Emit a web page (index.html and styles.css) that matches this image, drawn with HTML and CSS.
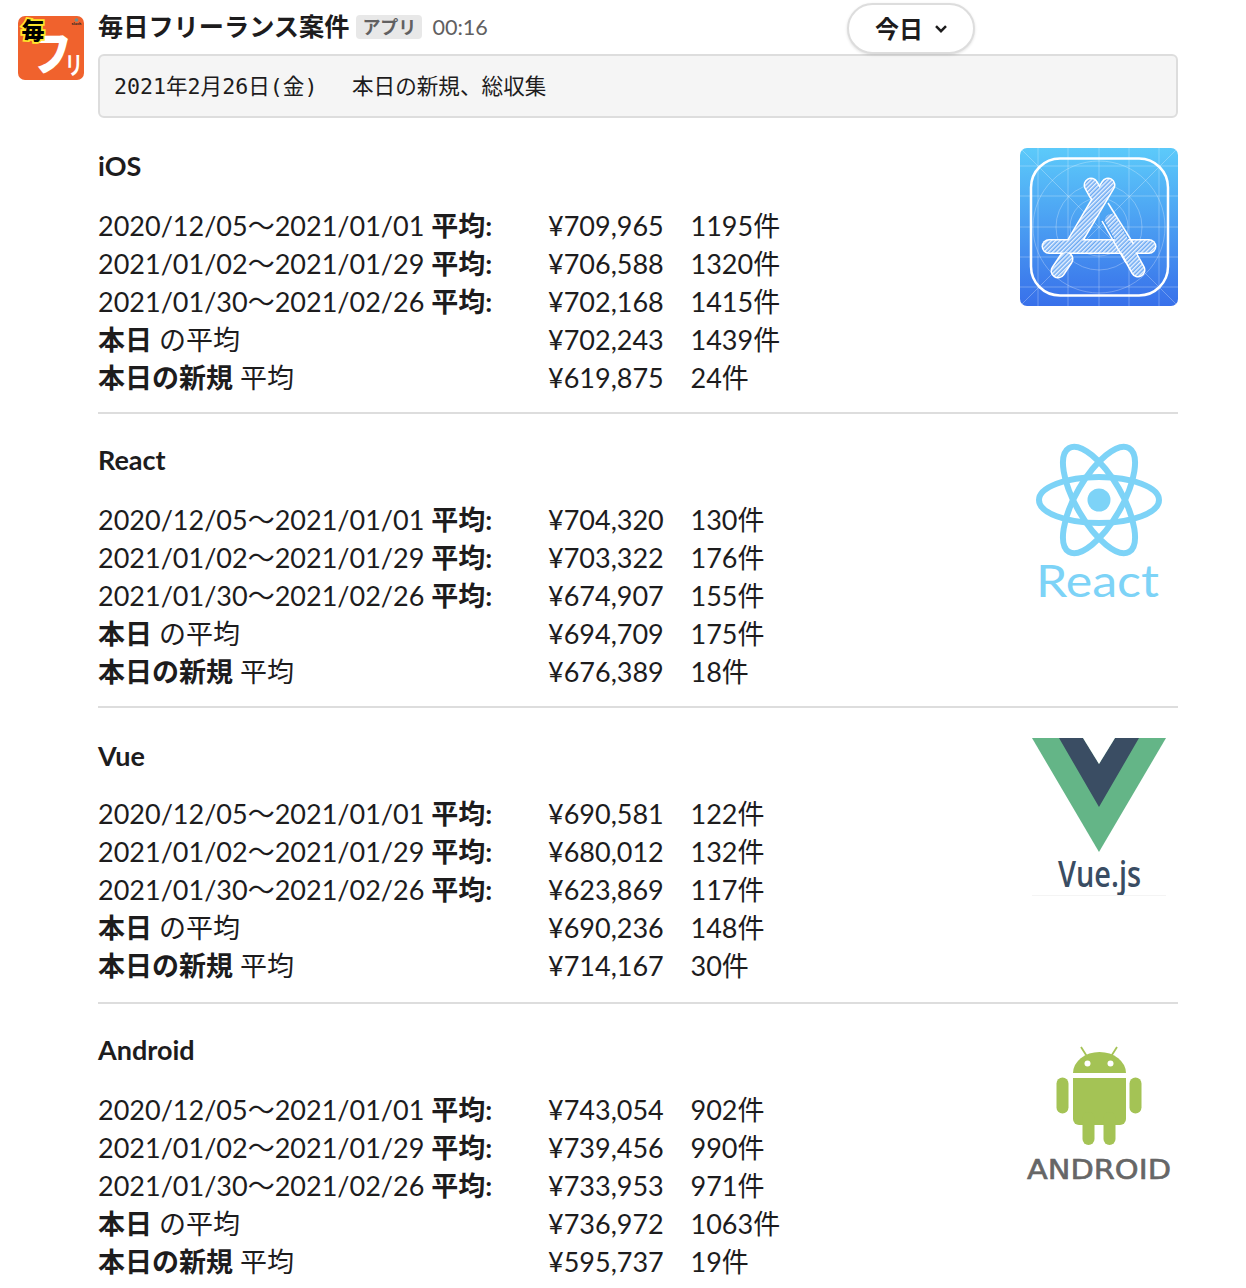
FILE: index.html
```html
<!DOCTYPE html>
<html lang="ja">
<head>
<meta charset="utf-8">
<title>毎日フリーランス案件</title>
<link rel="stylesheet" href="styles.css">
</head>
<body>
<div class="pill"><span>今日</span><svg class="chev" viewBox="0 0 12 8" width="12" height="8"><path d="M1 1.200 6 6.200l5-5" fill="none" stroke="#1d1c1d" stroke-width="2.500"/></svg></div>
<main class="msg">
  <svg class="avatar" viewBox="0 0 66 64" width="66" height="64">
    <rect width="66" height="64" rx="7" fill="#f0622d"/>
    <text class="av-fu" transform="translate(12 54) scale(1 1.100)" x="0" y="0">フ</text>
    <text class="av-ri" transform="translate(47 58) scale(.8 1.150)" x="0" y="0">リ</text>
    <text class="av-mai" x="3.500" y="23">毎</text>
    <circle cx="58.500" cy="4" r="1.800" fill="#6f8f8a"/>
    <text class="av-sl" x="53.500" y="9">slack</text>
  </svg>
  <div class="body">
    <header class="head">
      <strong class="name">毎日フリーランス案件</strong>
      <span class="badge">アプリ</span>
      <span class="time">00:16</span>
    </header>
    <div class="banner">2021年2月26日(金)　 本日の新規、総収集</div>

    <section class="sec sec-first">
      <div class="main">
        <h3 class="title">iOS</h3>
        <div class="row"><span>2020/12/05～2021/01/01 <b>平均:</b></span><span>¥709,965</span><span>1195件</span></div>
        <div class="row"><span>2021/01/02～2021/01/29 <b>平均:</b></span><span>¥706,588</span><span>1320件</span></div>
        <div class="row"><span>2021/01/30～2021/02/26 <b>平均:</b></span><span>¥702,168</span><span>1415件</span></div>
        <div class="row"><span><b>本日</b> の平均</span><span>¥702,243</span><span>1439件</span></div>
        <div class="row"><span><b>本日の新規</b> 平均</span><span>¥619,875</span><span>24件</span></div>
      </div>
      <svg class="logo" viewBox="0 0 158 158" width="158" height="158">
        <defs>
          <linearGradient id="sky" x1="0" y1="0" x2="0" y2="1"><stop offset="0" stop-color="#5ccafa"/><stop offset="1" stop-color="#3870ea"/></linearGradient>
          <pattern id="hatch" width="3" height="3" patternUnits="userSpaceOnUse" patternTransform="rotate(45)"><rect width="3" height="3" fill="#6aa8f2"/><rect width="1.500" height="3" fill="#e6f1ff"/></pattern>
          <clipPath id="tile"><rect width="158" height="158" rx="7"/></clipPath>
        </defs>
        <g clip-path="url(#tile)">
          <rect width="158" height="158" fill="url(#sky)"/>
          <g class="grid">
            <path d="M18 0v158M48 0v158M79 0v158M109 0v158M139 0v158M0 18h158M0 48h158M0 79h158M0 109h158M0 139h158M0 0l158 158M158 0 0 158"/>
            <circle cx="79" cy="79" r="66"/><circle cx="79" cy="79" r="43"/><circle cx="79" cy="79" r="29"/>
          </g>
          <rect class="tile-edge" x="11" y="10.500" width="137" height="137" rx="29"/>
          <g class="stick-w">
            <path d="M71 37 76 46"/>
            <path d="M88 37 52 98"/>
            <path d="M29 98.500H129"/>
            <path d="M46 111 38 123"/>
            <path d="M108 104 118 122"/>
          </g>
          <g class="stick-h">
            <path d="M71 37 76 46"/>
            <path d="M88 37 52 98"/>
            <path d="M29 98.500H129"/>
            <path d="M46 111 38 123"/>
            <path d="M91 72 118 122"/>
          </g>
          <g class="edge">
            <path d="M88 55 113.500 96"/>
            <path d="M82 73 106 115"/>
          </g>
        </g>
      </svg>
    </section>

    <section class="sec">
      <div class="main">
        <h3 class="title">React</h3>
        <div class="row"><span>2020/12/05～2021/01/01 <b>平均:</b></span><span>¥704,320</span><span>130件</span></div>
        <div class="row"><span>2021/01/02～2021/01/29 <b>平均:</b></span><span>¥703,322</span><span>176件</span></div>
        <div class="row"><span>2021/01/30～2021/02/26 <b>平均:</b></span><span>¥674,907</span><span>155件</span></div>
        <div class="row"><span><b>本日</b> の平均</span><span>¥694,709</span><span>175件</span></div>
        <div class="row"><span><b>本日の新規</b> 平均</span><span>¥676,389</span><span>18件</span></div>
      </div>
      <svg class="logo" viewBox="0 0 158 158" width="158" height="158">
        <g class="atom">
          <ellipse cx="79" cy="58" rx="60" ry="23"/>
          <ellipse cx="79" cy="58" rx="60" ry="23" transform="rotate(60 79 58)"/>
          <ellipse cx="79" cy="58" rx="60" ry="23" transform="rotate(120 79 58)"/>
        </g>
        <circle cx="79" cy="58" r="11.500" fill="#7dd3f7"/>
        <text class="react-t" x="16" y="155" textLength="123" lengthAdjust="spacingAndGlyphs">React</text>
      </svg>
    </section>

    <section class="sec sec-vue">
      <div class="main">
        <h3 class="title title-vue">Vue</h3>
        <div class="row"><span>2020/12/05～2021/01/01 <b>平均:</b></span><span>¥690,581</span><span>122件</span></div>
        <div class="row"><span>2021/01/02～2021/01/29 <b>平均:</b></span><span>¥680,012</span><span>132件</span></div>
        <div class="row"><span>2021/01/30～2021/02/26 <b>平均:</b></span><span>¥623,869</span><span>117件</span></div>
        <div class="row"><span><b>本日</b> の平均</span><span>¥690,236</span><span>148件</span></div>
        <div class="row"><span><b>本日の新規</b> 平均</span><span>¥714,167</span><span>30件</span></div>
      </div>
      <svg class="logo" viewBox="0 0 158 158" width="158" height="158">
        <polygon points="12,0 146,0 79,114" fill="#64b587"/>
        <polygon points="39,0 63,0 79,26 95,0 119,0 79,69" fill="#3a4d63"/>
        <polygon points="63,0 95,0 79,26" fill="#fff"/>
        <text class="vue-t" x="38" y="149" textLength="83" lengthAdjust="spacingAndGlyphs">Vue.js</text>
        <path d="M12 157.500h134" stroke="#f4f4f4"/>
      </svg>
    </section>

    <section class="sec sec-last">
      <div class="main">
        <h3 class="title">Android</h3>
        <div class="row"><span>2020/12/05～2021/01/01 <b>平均:</b></span><span>¥743,054</span><span>902件</span></div>
        <div class="row"><span>2021/01/02～2021/01/29 <b>平均:</b></span><span>¥739,456</span><span>990件</span></div>
        <div class="row"><span>2021/01/30～2021/02/26 <b>平均:</b></span><span>¥733,953</span><span>971件</span></div>
        <div class="row"><span><b>本日</b> の平均</span><span>¥736,972</span><span>1063件</span></div>
        <div class="row"><span><b>本日の新規</b> 平均</span><span>¥595,737</span><span>19件</span></div>
      </div>
      <svg class="logo" viewBox="0 0 158 158" width="158" height="158">
        <g fill="#a4c355">
          <path d="M53 41a26.500 21 0 0 1 53 0z"/>
          <path d="M53 46h53v41a6 6 0 0 1-6 6H59a6 6 0 0 1-6-6z"/>
          <rect x="36.500" y="45.500" width="12" height="36" rx="6"/>
          <rect x="109.500" y="45.500" width="12" height="36" rx="6"/>
          <rect x="62.500" y="80" width="12" height="33" rx="6"/>
          <rect x="83.500" y="80" width="12" height="33" rx="6"/>
        </g>
        <path d="M61 15l7 11M97 15l-7 11" stroke="#a4c355" stroke-width="1.800" fill="none"/>
        <circle cx="67.500" cy="31.500" r="3" fill="#fff"/>
        <circle cx="90.500" cy="31.500" r="3" fill="#fff"/>
        <text class="droid-t" x="7" y="147" textLength="144" lengthAdjust="spacingAndGlyphs">ANDROID</text>
      </svg>
    </section>
  </div>
</main>
</body>
</html>
```
FILE: styles.css
```css
* { box-sizing: border-box; }
html, body { margin: 0; background: #fff; }
body {
  position: relative;
  width: 1246px;
  height: 1288px;
  overflow: hidden;
  color: #1d1c1d;
  font-family: Lato, "Noto Sans CJK JP", sans-serif;
  font-size: 27px;
  line-height: 38px;
}
.msg { display: flex; gap: 14px; padding: 12px 0 0 18px; }
.avatar { flex: none; margin-top: 4px; }
.av-fu { font: 900 42px "Noto Sans CJK JP", sans-serif; fill: #fff; }
.av-ri { font: 700 22px "Noto Sans CJK JP", sans-serif; fill: #fff; }
.av-mai { font: 900 23px "Noto Sans CJK JP", sans-serif; fill: #000; stroke: #ffe629; stroke-width: 3.500px; paint-order: stroke; }
.av-sl { font: 700 4.500px Lato, sans-serif; fill: #222; }
.body { width: 1080px; flex: none; }
.head { display: flex; align-items: center; height: 30px; margin-bottom: 12px; }
.name { margin-top: -2px; font-size: 25.200px; font-weight: 700; line-height: 30px; }
.badge {
  margin-left: 7px;
  width: 66px;
  height: 24px;
  border-radius: 4px;
  background: #e8e8e8;
  color: #616061;
  font-size: 18px;
  font-weight: 700;
  line-height: 24px;
  text-align: center;
}
.time { margin-left: 10px; color: #616061; font-size: 21.600px; line-height: 30px; }
.banner {
  height: 64px;
  padding: 0 14px;
  border: 2px solid #ddd;
  border-radius: 6px;
  background: #f5f5f5;
  font-family: "DejaVu Sans Mono", "Noto Sans CJK JP", monospace;
  font-size: 21.600px;
  line-height: 62px;
  white-space: pre;
}
.sec {
  display: flex;
  justify-content: space-between;
  padding: 27px 0 15px;
  border-bottom: 2px solid #ddd;
}
.sec-first { padding-top: 29px; }
.sec-vue { padding: 29px 0 17px; }
.sec-last { border-bottom: 0; }
.main { width: 800px; }
.title { margin: 0 0 22px; font-size: 27px; font-weight: 700; line-height: 38px; }
.title-vue { margin-bottom: 20px; }
.row { display: grid; grid-template-columns: 450px 142.500px 1fr; height: 38px; white-space: nowrap; }
.row b { font-weight: 700; }
.logo { flex: none; margin-top: 1px; overflow: visible; }
.grid { fill: none; stroke: #fff; stroke-opacity: .28; stroke-width: 1px; }
.tile-edge { fill: none; stroke: #fff; stroke-width: 2.500px; }
.stick-w { fill: none; stroke: #fff; stroke-width: 15px; stroke-linecap: round; }
.stick-h { fill: none; stroke: url(#hatch); stroke-width: 12px; stroke-linecap: round; }
.edge { fill: none; stroke: #fff; stroke-width: 1.500px; }
.atom { fill: none; stroke: #7dd3f7; stroke-width: 6px; }
.react-t { font: 400 44px Lato, sans-serif; fill: #7dd3f7; }
.vue-t { font: 600 36px "Open Sans", sans-serif; fill: #3a4d63; }
.droid-t { font: 400 26px "DejaVu Sans", sans-serif; fill: #666; stroke: #666; stroke-width: .6px; }
.pill {
  position: absolute;
  top: 3px;
  left: 847px;
  display: flex;
  align-items: center;
  justify-content: center;
  gap: 12px;
  width: 128px;
  height: 51px;
  border: 2px solid #ddd;
  border-radius: 26px;
  background: #fff;
  box-shadow: 0 1px 3px rgba(0, 0, 0, .12);
  font-size: 24px;
  font-weight: 700;
}
```
